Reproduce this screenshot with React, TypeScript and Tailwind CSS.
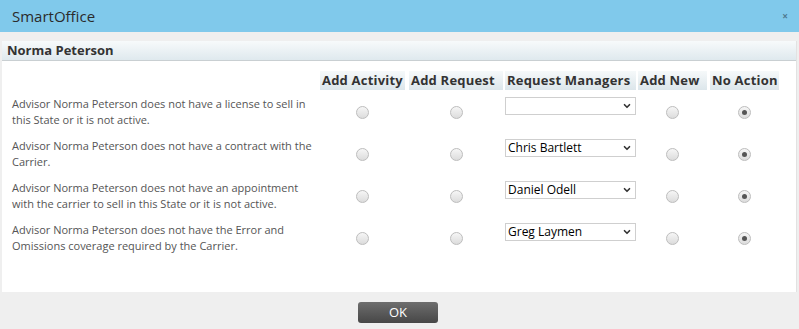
import { ChevronDown } from "lucide-react";

const rows = [
  { text: "Advisor Norma Peterson does not have a license to sell in this State or it is not active.", manager: "" },
  { text: "Advisor Norma Peterson does not have a contract with the Carrier.", manager: "Chris Bartlett" },
  { text: "Advisor Norma Peterson does not have an appointment with the carrier to sell in this State or it is not active.", manager: "Daniel Odell" },
  { text: "Advisor Norma Peterson does not have the Error and Omissions coverage required by the Carrier.", manager: "Greg Laymen" },
];

// widths and trailing gaps taken from the header cells
const cols = [
  { label: "Add Activity", cls: "w-[85px] mr-[4px]" },
  { label: "Add Request", cls: "w-[94px] mr-[2px]" },
  { label: "Request Managers", cls: "w-[131px] mr-[2px]" },
  { label: "Add New", cls: "w-[69px] mr-[3px]" },
  { label: "No Action", cls: "w-[69px]" },
];

function Radio({ checked }: { checked?: boolean }) {
  return (
    <span className="w-[13px] h-[13px] rounded-full border border-[#bdbdbd] bg-gradient-to-b from-[#f6f6f6] to-[#dcdcdc] flex items-center justify-center">
      {checked && <span className="w-[5px] h-[5px] rounded-full bg-[#555]" />}
    </span>
  );
}

function ManagerSelect({ value }: { value: string }) {
  return (
    <div className="w-[131px] h-[18px] border border-[#cfcfcf] bg-white flex items-center justify-between pl-[2px] pr-[3px] text-[12px] text-black">
      <span>{value}</span>
      <ChevronDown className="w-[10px] h-[10px] text-[#333]" strokeWidth={4} />
    </div>
  );
}

export default function App() {
  return (
    <div className="w-[799px] h-[329px] bg-[#efefef] font-['Open_Sans',sans-serif] overflow-hidden">
      <div className="h-[32px] bg-[#80c9eb] flex items-center justify-between pl-[12px] pr-[11px]">
        <span className="text-[15px] text-[#2b2b2b]">SmartOffice</span>
        <span className="text-[10px] text-[#4f7a90] font-bold">×</span>
      </div>
      <div className="mx-[2px] mt-[9px] h-[251px] bg-white border-r border-[#e2e2e2]">
        <div className="h-[20px] bg-gradient-to-b from-[#f7fafb] to-[#dfe9ee] border-b border-[#c9cfd2] flex items-center pl-[5px]">
          <span className="text-[13px] font-bold text-[#333]">Norma Peterson</span>
        </div>
        <div className="flex mt-[10px]">
          <div className="w-[318px]" />
          {cols.map((c) => (
            <div key={c.label} className={`${c.cls} h-[19px] bg-gradient-to-b from-[#f6f9fa] to-[#dce6eb] flex items-center pl-[2px] text-[13px] font-bold text-[#333] tracking-[0.2px] whitespace-nowrap`}>
              {c.label}
            </div>
          ))}
        </div>
        {rows.map((r) => (
          <div key={r.text} className="flex h-[42px]">
            <div className="w-[318px] flex items-center pl-[10px] pr-[6px] pt-[2px] text-[11px] leading-[16px] text-[#555]">{r.text}</div>
            <div className={`${cols[0].cls} flex items-center justify-center pt-[2px]`}><Radio /></div>
            <div className={`${cols[1].cls} flex items-center justify-center pt-[2px]`}><Radio /></div>
            <div className={`${cols[2].cls} pt-[7px]`}><ManagerSelect value={r.manager} /></div>
            <div className={`${cols[3].cls} flex items-center justify-center pt-[2px]`}><Radio /></div>
            <div className={`${cols[4].cls} flex items-center justify-center pt-[2px]`}><Radio checked /></div>
          </div>
        ))}
      </div>
      <div className="flex justify-center mt-[10px]">
        <button className="w-[80px] h-[21px] rounded-[3px] bg-gradient-to-b from-[#6e6e6e] to-[#474747] text-white text-[13px] ml-[-3px]">OK</button>
      </div>
    </div>
  );
}
